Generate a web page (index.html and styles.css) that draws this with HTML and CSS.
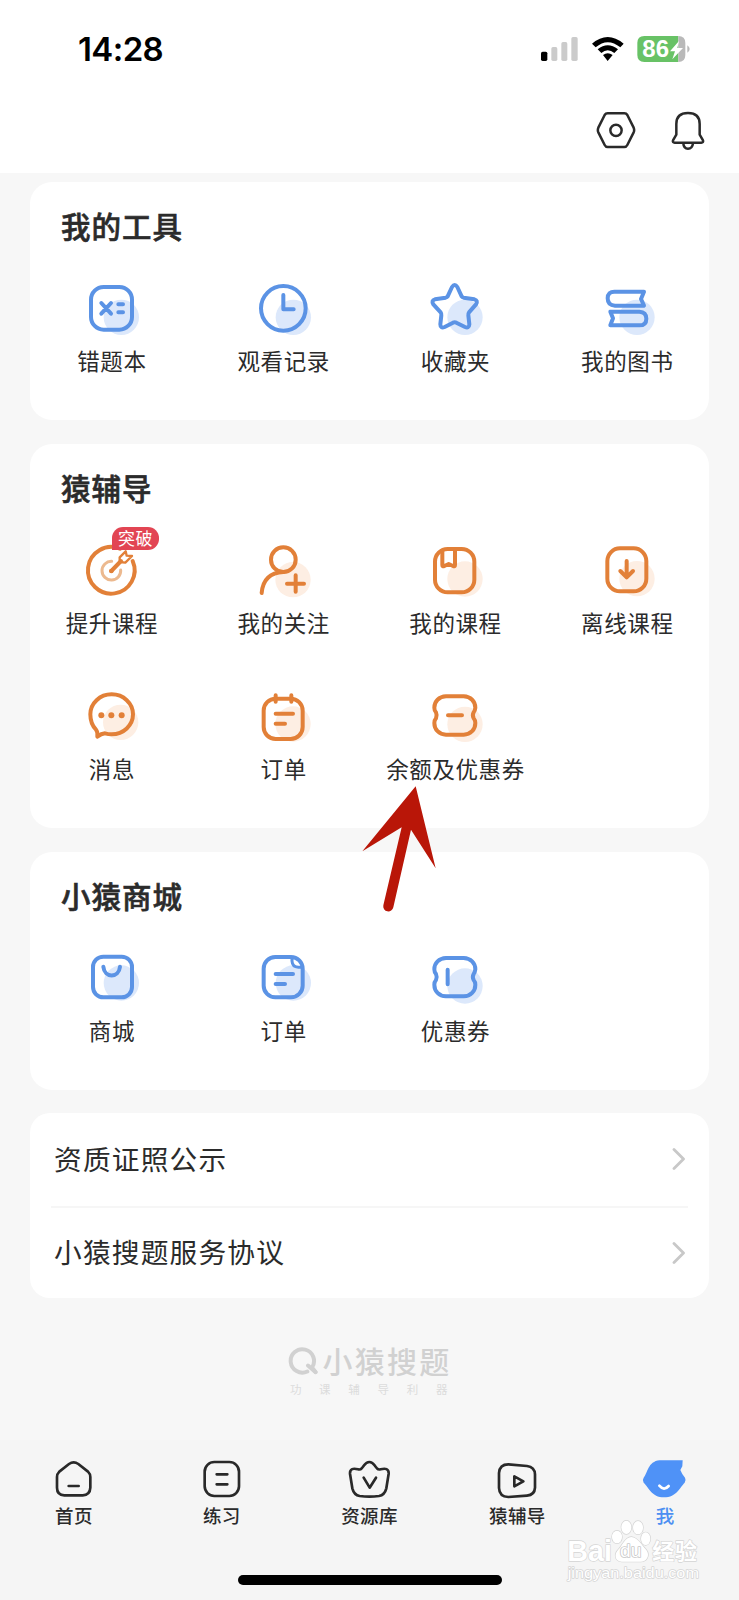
FILE: index.html
```html
<!DOCTYPE html>
<html lang="zh-CN">
<head>
<meta charset="utf-8">
<title>我的</title>
<link rel="stylesheet" href="styles.css">
</head>
<body>
<div class="screen">
  <header class="top">
    <div class="status">
      <span class="time">14:28</span>
      <svg class="status-icons" viewBox="50 30 480 114">
        <rect x="62" y="95" width="19" height="28" rx="5" fill="#000"/>
        <g fill="#cbcbcb"><rect x="93" y="81" width="18" height="42" rx="5"/><rect x="123" y="66" width="18" height="57" rx="5"/><rect x="153" y="51" width="19" height="72" rx="5"/></g>
        <path d="M215 71Q262 31 310 71L300 82Q262 51 226 82ZM232 88Q262 63 293 88L282 99Q262 83 243 99ZM248 105Q262 94 277 105L262 123Z" fill="#000"/>
        <path d="M372 48H474V126H372Q351 126 351 105V69Q351 48 372 48Z" fill="#68c266"/>
        <path d="M474 48Q495 48 495 69V105Q495 126 474 126Z" fill="#b9b9b9"/>
        <path d="M501 76Q508 81 508 87T501 98Z" fill="#b9b9b9"/>
        <text class="battery-level" x="366" y="112" textLength="80" lengthAdjust="spacingAndGlyphs">86</text>
        <path d="M476 63L449 94H464L456 118L488 84H471Z" fill="#fff"/>
      </svg>
    </div>
    <div class="actions">
      <svg class="action" viewBox="228 271 120 120"><path d="M263 281H313Q319 281 322 286L341 324Q344 331 341 338L322 376Q319 382 313 382H263Q257 382 254 376L235 338Q232 331 235 324L254 286Q257 281 263 281Z"/><circle cx="288" cy="332" r="17"/></svg>
      <svg class="action" viewBox="444 271 120 120"><path d="M469 345V313Q469 280 504 280T539 313V345L549 362Q551 369 544 369H464Q457 369 459 362ZM490 371Q491 387 504 387T519 371"/></svg>
    </div>
  </header>

  <main class="content">
    <section class="card">
      <h2 class="title">我的工具</h2>
      <div class="grid">
        <div class="item"><svg class="icon blue" viewBox="157 299 180 180"><circle class="tint" cx="275" cy="414" r="53"/><rect x="184" y="323" width="123" height="128" rx="38"/><path d="M215 371L244 403M244 371L215 403M266 375H280M266 399H280"/></svg><span class="label">错题本</span></div>
        <div class="item"><svg class="icon blue" viewBox="673 299 180 180"><circle class="tint" cx="791" cy="414" r="53"/><circle cx="761" cy="387" r="67"/><path d="M761 347V390H792"/></svg><span class="label">观看记录</span></div>
        <div class="item"><svg class="icon blue" viewBox="137 299 180 180"><circle class="tint" cx="257" cy="414" r="53"/><path d="M218 323Q226 311 234 323L247 351Q249 354 253 355L285 360Q297 364 290 375L269 399Q266 403 267 408L270 435Q269 448 257 443L231 430Q226 428 221 430L196 443Q183 448 183 435L186 408Q187 403 184 399L162 375Q155 364 167 360L199 355Q203 354 205 351Z"/></svg><span class="label">收藏夹</span></div>
        <div class="item"><svg class="icon blue" viewBox="652 299 180 180"><circle class="tint" cx="772" cy="414" r="53"/><path d="M706 337H793L784 359L793 379H706Q684 378 684 357T706 337ZM692 397H779Q800 398 800 418T779 438H692L700 417Z"/></svg><span class="label">我的图书</span></div>
      </div>
    </section>

    <section class="card">
      <h2 class="title">猿辅导</h2>
      <div class="grid">
        <div class="item"><svg class="icon orange" viewBox="157 305 180 180"><path d="M271 328A70 70 0 1 0 309 365"/><path class="soft" d="M246 366A28 28 0 1 0 273 392"/><path d="M245 395L274 365"/><path d="M270 368V354L288 336L291 349L307 350L287 370Z" stroke-width="7"/><circle class="dot" cx="245" cy="395" r="7"/></svg><span class="badge">突破</span><span class="label">提升课程</span></div>
        <div class="item"><svg class="icon orange" viewBox="673 305 180 180"><circle class="tint" cx="790" cy="421" r="53"/><circle cx="761" cy="361" r="37"/><path d="M696 461Q701 401 761 398M798 408V457M772 433H823"/></svg><span class="label">我的关注</span></div>
        <div class="item"><svg class="icon orange" viewBox="167 305 180 180"><circle class="tint" cx="287" cy="419" r="53"/><rect x="197" y="329" width="118" height="130" rx="38"/><path d="M219 334V377Q219 383 225 380L238 374L251 380Q257 383 257 377V331"/></svg><span class="label">我的课程</span></div>
        <div class="item"><svg class="icon orange" viewBox="682 305 180 180"><circle class="tint" cx="802" cy="418" r="53"/><rect x="713" y="327" width="117" height="129" rx="38"/><path d="M771 365V411M752 395L771 414L790 395"/></svg><span class="label">离线课程</span></div>
        <div class="item"><svg class="icon orange" viewBox="157 744 180 180"><circle class="tint" cx="273" cy="850" r="53"/><path d="M203 893Q205 880 199 872Q182 855 182 826A64 60 0 1 1 246 886Q236 886 226 883Q215 884 203 893Z"/><circle class="dot" cx="215" cy="829" r="9"/><circle class="dot" cx="245" cy="829" r="9"/><circle class="dot" cx="276" cy="829" r="9"/></svg><span class="label">消息</span></div>
        <div class="item"><svg class="icon orange" viewBox="673 744 180 180"><circle class="tint" cx="790" cy="855" r="53"/><rect x="702" y="779" width="117" height="121" rx="36"/><path d="M738 769V788M785 769V788M738 824H790M738 854H766"/></svg><span class="label">订单</span></div>
        <div class="item"><svg class="icon orange" viewBox="167 744 180 180"><circle class="tint" cx="287" cy="856" r="53"/><path d="M230 772H283C304 773 318 787 318 806Q317 815 313 820Q308 829 313 838Q318 844 318 852C318 872 304 886 283 887H230C209 886 195 872 195 852Q195 844 200 838Q204 829 200 820Q195 815 195 806C195 787 209 773 230 772ZM236 829H278"/></svg><span class="label">余额及优惠券</span></div>
      </div>
    </section>

    <section class="card">
      <h2 class="title">小猿商城</h2>
      <div class="grid">
        <div class="item"><svg class="icon blue" viewBox="157 330 180 180"><circle class="tint" cx="275" cy="432" r="53"/><rect x="190" y="353" width="117" height="122" rx="31"/><path d="M221 383C225 418 267 418 271 383"/></svg><span class="label">商城</span></div>
        <div class="item"><svg class="icon blue" viewBox="673 330 180 180"><circle class="tint" cx="791" cy="432" r="53"/><rect x="702" y="354" width="117" height="121" rx="35"/><path d="M738 405H790M738 435H766"/><path d="M787 356V366Q788 384 806 385H818" stroke-width="9"/></svg><span class="label">订单</span></div>
        <div class="item"><svg class="icon blue" viewBox="227 510 180 180"><circle class="tint" cx="347" cy="621" r="53"/><path d="M290 537H343C364 538 378 552 378 571Q377 580 373 585Q368 594 373 603Q378 609 378 617C378 637 364 651 343 652H290C269 651 255 637 255 617Q255 609 260 603Q264 594 260 585Q255 580 255 571C255 552 269 538 290 537ZM295 572V616"/></svg><span class="label">优惠券</span></div>
      </div>
    </section>

    <section class="list">
      <div class="row"><span>资质证照公示</span><svg class="chevron" viewBox="0 0 14 22"><path d="M2 1.500L11.500 11L2 20.500"/></svg></div>
      <div class="row"><span>小猿搜题服务协议</span><svg class="chevron" viewBox="0 0 14 22"><path d="M2 1.500L11.500 11L2 20.500"/></svg></div>
    </section>

    <div class="brand">
      <div class="brand-name"><svg class="brand-mark" viewBox="85 80 90 86"><path d="M143 156A35 35 0 1 1 157 144L167 157"/><path d="M145 138L168 158"/></svg><span>小猿搜题</span></div>
      <div class="slogan">功课辅导利器</div>
    </div>
  </main>

  <nav class="tabs">
    <div class="tab"><svg class="tab-icon" viewBox="147 71 150 150"><path d="M207 101Q221 91 235 101L264 124Q271 131 271 140V172Q270 194 248 195H193Q171 194 171 172V140Q171 131 178 124ZM206 167H236"/></svg><span>首页</span></div>
    <div class="tab"><svg class="tab-icon" viewBox="590 71 150 150"><rect x="613" y="95" width="103" height="102" rx="29"/><path d="M649 132H681M649 162H681"/></svg><span>练习</span></div>
    <div class="tab"><svg class="tab-icon" viewBox="1033 71 150 150"><path d="M1086 114C1096 104 1096 95 1109 95S1122 104 1132 114Q1136 119 1143 117C1157 113 1168 115 1167 130L1160 174Q1155 194 1138 197Q1109 201 1080 197Q1063 194 1058 174L1051 130C1050 115 1061 113 1075 117Q1082 119 1086 114ZM1092 142L1110 172L1129 142"/></svg><span>资源库</span></div>
    <div class="tab"><svg class="tab-icon" viewBox="337 71 150 150"><path d="M386 102L442 107Q465 110 466 132V172Q465 194 442 196L386 200Q359 199 358 173V128Q360 102 386 102ZM404 138V168L431 153Z"/></svg><span>猿辅导</span></div>
    <div class="tab active"><svg class="tab-icon" viewBox="780 71 150 150"><path class="face" d="M839 90H908L907 108L901 119Q906 132 915 142Q919 149 914 157C902 168 890 201 852 201C815 201 804 168 791 157Q786 149 791 142C803 130 803 93 839 90Z"/><path class="smile" d="M838 166Q852 183 866 167"/></svg><span>我</span></div>
  </nav>
  <div class="home-bar"></div>

  <svg class="pointer" viewBox="30 10 240 400"><path d="M197 20L257 266L183 150L130 383A15 15 0 0 1 100 377L155 143L37 215Z"/></svg>
  <svg class="watermark" viewBox="555 265 410 200">
    <text class="wm-big" x="562" y="394" textLength="134" lengthAdjust="spacingAndGlyphs">Bai</text>
    <g class="paw"><ellipse cx="711" cy="322" rx="15" ry="19"/><ellipse cx="739" cy="293" rx="15" ry="20"/><ellipse cx="774" cy="294" rx="15" ry="20"/><ellipse cx="797" cy="327" rx="14" ry="19"/><path d="M754 322C773 324 785 346 799 361C812 379 798 397 781 396H725C704 395 702 373 714 361C727 348 735 322 754 322Z"/></g>
    <text class="wm-du" x="720" y="382" textLength="64" lengthAdjust="spacingAndGlyphs">du</text>
    <text class="wm-cn" x="817" y="389" textLength="134">经验</text>
    <text class="wm-url" x="563" y="445" textLength="394" lengthAdjust="spacingAndGlyphs">jingyan.baidu.com</text>
  </svg>
</div>
</body>
</html>
```
FILE: styles.css
```css
* { box-sizing: border-box; }
body { margin: 0; background: #f7f7f7; color: #2b2b2b; font-family: "Noto Sans CJK SC", sans-serif; }
svg { display: block; fill: none; stroke-linecap: round; stroke-linejoin: round; }
.screen { position: relative; width: 739px; height: 1600px; overflow: hidden; display: flex; flex-direction: column; }

.top { height: 173px; flex: none; background: #fff; }
.status { height: 98px; padding: 30px 42px 0 78px; display: flex; justify-content: space-between; align-items: flex-start; }
.time { font: 600 33px/38px Inter, sans-serif; color: #000; letter-spacing: -0.600px; }
.status-icons { width: 160px; height: 38px; }
.battery-level { font: 700 72px "Liberation Sans", sans-serif; fill: #fff; }
.actions { display: flex; justify-content: flex-end; gap: 32px; padding: 12px 31px 0 0; }
.action { width: 40px; height: 40px; stroke: #2a2a2a; stroke-width: 7.500; }

.content { flex: 1; padding: 9px 30px 0; display: flex; flex-direction: column; gap: 24px; }
.card { background: #fff; border-radius: 22px; padding: 25px 0 46px; }
.title { margin: 0 0 36px 31px; font-size: 29.500px; line-height: 36px; font-weight: 500; letter-spacing: 1px; -webkit-text-stroke: .6px #2b2b2b; }
.card .grid { display: grid; grid-template-columns: repeat(4, 171.800px); row-gap: 51px; margin: 0 -4px; }
.item { position: relative; display: flex; flex-direction: column; align-items: center; gap: 9px; height: 95px; }
.icon { width: 60px; height: 60px; stroke-width: 12; }
.label { font-size: 22.500px; line-height: 24px; letter-spacing: .6px; white-space: nowrap; }
.tint, .dot { stroke: none; }
.blue { stroke: #5b93e5; }
.blue .tint { fill: #dce8fb; }
.orange { stroke: #e28038; stroke-width: 12; }
.orange .tint { fill: #fdeee3; }
.orange .dot { fill: #e28038; }
.orange .soft { stroke: #ecb98f; stroke-width: 9; }
.badge { position: absolute; left: 86px; top: -14px; width: 47px; height: 23px; border-radius: 11px 11px 11px 0; background: #e24553; color: #fff; font-size: 17px; line-height: 22px; text-align: center; letter-spacing: .5px; }

.list { background: #fff; border-radius: 20px; margin-top: -1px; padding: 0 21px; }
.row { height: 92.500px; display: flex; align-items: center; justify-content: space-between; padding: 0 2px 0 3px; font-size: 27.700px; letter-spacing: 1.200px; }
.row + .row { border-top: 2px solid #f6f6f6; }
.row span { line-height: 34px; margin-top: -3px; }
.chevron { width: 14px; height: 22px; stroke: #c8c8c8; stroke-width: 2.800; }

.brand { display: flex; flex-direction: column; align-items: center; color: #d1d1d1; margin-top: 21px; }
.brand-name { display: flex; align-items: center; gap: 5px; font-size: 30px; line-height: 34px; font-weight: 500; letter-spacing: 2.200px; }
.brand-mark { width: 30px; height: 29px; stroke: #d1d1d1; stroke-width: 12; }
.slogan { font-size: 11.500px; line-height: 14px; letter-spacing: 17.700px; margin: 5px -16px 0 0; color: #dcdcdc; }

.tabs { flex: none; height: 160px; padding-top: 14px; background: #f5f5f5; display: grid; grid-template-columns: repeat(5, 1fr); }
.tab { display: flex; flex-direction: column; align-items: center; font-size: 18.500px; line-height: 22px; font-weight: 500; letter-spacing: .3px; }
.tab-icon { width: 50px; height: 50px; stroke: #292929; stroke-width: 8; }
.active { color: #4c8ff2; }
.face { fill: #4f92f7; stroke: none; }
.smile { stroke: #fff; }
.home-bar { position: absolute; left: 238px; top: 1575px; width: 264px; height: 10px; border-radius: 5px; background: #000; }

.pointer { position: absolute; left: 360px; top: 783.300px; width: 80px; height: 133.300px; fill: #b91608; }
.watermark { position: absolute; left: 565px; top: 1518.300px; width: 136.700px; height: 66.700px; fill: #fff; stroke: #d4d4d4; stroke-width: 4; paint-order: stroke; font-family: "Liberation Sans", sans-serif; }
.wm-big { font-size: 88px; font-weight: 700; }
.wm-du { font-size: 57px; stroke: #c8c8c8; stroke-width: 5; }
.wm-cn { font-family: "Noto Sans CJK SC", sans-serif; font-size: 66px; font-weight: 700; }
.wm-url { font-size: 44px; stroke-width: 4; }
```
